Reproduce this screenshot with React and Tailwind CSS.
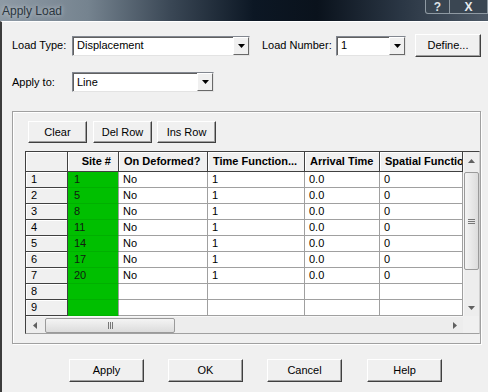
import React from 'react';

const rows = [
  { n: 1, site: '1', def: 'No', tf: '1', at: '0.0', sf: '0' },
  { n: 2, site: '5', def: 'No', tf: '1', at: '0.0', sf: '0' },
  { n: 3, site: '8', def: 'No', tf: '1', at: '0.0', sf: '0' },
  { n: 4, site: '11', def: 'No', tf: '1', at: '0.0', sf: '0' },
  { n: 5, site: '14', def: 'No', tf: '1', at: '0.0', sf: '0' },
  { n: 6, site: '17', def: 'No', tf: '1', at: '0.0', sf: '0' },
  { n: 7, site: '20', def: 'No', tf: '1', at: '0.0', sf: '0' },
  { n: 8, site: '', def: '', tf: '', at: '', sf: '' },
  { n: 9, site: '', def: '', tf: '', at: '', sf: '' },
];

const Btn = ({ children, className = '' }) => (
  <button className={`flex items-center justify-center bg-[#f0f0f0] border border-t-white border-l-white border-r-[#404040] border-b-[#404040] shadow-[inset_-1px_-1px_0_#a0a0a0] text-[11px] text-black ${className}`}>
    {children}
  </button>
);

const Combo = ({ value, className = '' }) => (
  <div className={`flex h-[20px] bg-white border border-t-[#828790] border-l-[#828790] border-r-[#e3e3e3] border-b-[#e3e3e3] shadow-[inset_1px_1px_0_#606060] ${className}`}>
    <div className="flex-1 flex items-center pl-[4px] text-[11px] text-black">{value}</div>
    <div className="w-[16px] flex items-center justify-center bg-[#f0f0f0] border border-t-white border-l-white border-r-[#696969] border-b-[#696969]">
      <svg width="7" height="4" viewBox="0 0 7 4"><polygon points="0,0 7,0 3.5,4" fill="#000" /></svg>
    </div>
  </div>
);

const Arrow = ({ dir }) => {
  const pts = {
    up: '0,4 7,4 3.5,0',
    down: '0,0 7,0 3.5,4',
    left: '4,0 4,7 0,3.5',
    right: '0,0 0,7 4,3.5',
  }[dir];
  const vert = dir === 'up' || dir === 'down';
  return (
    <svg width={vert ? 7 : 4} height={vert ? 4 : 7} viewBox={vert ? '0 0 7 4' : '0 0 4 7'}>
      <polygon points={pts} fill="#606060" />
    </svg>
  );
};

const headCell = 'bg-[#f0f0f0] border-r border-b border-r-[#404040] border-b-[#404040] shadow-[inset_1px_1px_0_#ffffff] font-bold text-[11px] text-black flex items-center whitespace-nowrap overflow-hidden';
const dataCell = 'bg-white border-r border-b border-[#a0a0a0] text-[11px] text-black flex items-center pl-[4px] whitespace-nowrap overflow-hidden';

export default function App() {
  return (
    <div className="w-[488px] h-[392px] overflow-hidden flex flex-col bg-[#f0f0f0] font-['Liberation_Sans',Arial,sans-serif]">
      <div className="h-[21px] flex justify-between items-start bg-[linear-gradient(90deg,#8e9aa5_0%,#75838f_18%,#3a4755_35%,#0c1724_52%,#0a121c_65%,#2a3644_82%,#4e5a67_100%)]">
        <div className="pl-[2px] pt-[2px] text-[12px] text-[#2b3640] [text-shadow:0_0_5px_rgba(220,225,230,0.9)]">Apply Load</div>
        <div className="flex">
          <div className="w-[25px] h-[14px] flex items-center justify-center border border-t-0 border-[#8f9aa3] rounded-bl-[3px] bg-[#3a4652] text-[12px] font-bold text-[#dfe3e7] leading-none">?</div>
          <div className="w-[38px] h-[14px] flex items-center justify-center border border-t-0 border-l-0 border-[#8f9aa3] bg-[#3a4652] text-[12px] font-bold text-[#e8ebee] leading-none">X</div>
        </div>
      </div>

      <div className="flex-1 border-l-2 border-l-[#3c3c3c] border-t border-t-white pl-[10px] pt-[12px]">
        <div className="flex items-center h-[23px]">
          <div className="w-[60px] text-[11px] text-black">Load Type:</div>
          <Combo value="Displacement" className="w-[178px]" />
          <div className="ml-[12px] w-[74px] text-[11px] text-black">Load Number:</div>
          <Combo value="1" className="w-[70px]" />
          <Btn className="ml-[9px] w-[66px] h-[23px]">Define...</Btn>
        </div>

        <div className="flex items-center mt-[15px] h-[20px]">
          <div className="w-[60px] text-[11px] text-black">Apply to:</div>
          <Combo value="Line" className="w-[142px]" />
        </div>

        <div className="mt-[19px] w-[469px] h-[233px] border border-[#a0a0a0] shadow-[inset_1px_1px_0_#ffffff,1px_1px_0_#ffffff] pt-[9px]">
          <div className="flex pl-[15px] h-[22px]">
            <Btn className="w-[59px] h-[22px]">Clear</Btn>
            <Btn className="ml-[6px] w-[59px] h-[22px]">Del Row</Btn>
            <Btn className="ml-[5px] w-[59px] h-[22px]">Ins Row</Btn>
          </div>

          <div className="mt-[8px] ml-[12px] w-[455px] border border-t-[#404040] border-l-[#404040] border-r-[#d0d0d0] border-b-[#a0a0a0] bg-[#f0f0f0]">
            <div className="flex">
              <div className="w-[437px] h-[164px] grid grid-cols-[42px_51px_89px_97px_75px_83px] grid-rows-[20px_repeat(9,16px)] bg-white">
                <div className={headCell}></div>
                <div className={`${headCell} justify-end pr-[7px]`}>Site #</div>
                <div className={`${headCell} pl-[5px]`}>On Deformed?</div>
                <div className={`${headCell} pl-[5px]`}>Time Function...</div>
                <div className={`${headCell} pl-[5px]`}>Arrival Time</div>
                <div className={`${headCell} pl-[5px]`}>Spatial Function</div>
                {rows.map((r) => (
                  <React.Fragment key={r.n}>
                    <div className="bg-[#f0f0f0] border-r border-b border-r-[#404040] border-b-[#404040] shadow-[inset_1px_1px_0_#ffffff] text-[11px] text-black flex items-center pl-[5px]">{r.n}</div>
                    <div className="bg-[#00bf00] border-r border-b border-r-[#a0a0a0] border-b-[#00b000] text-[11px] text-[#102010] flex items-center pl-[6px]">{r.site}</div>
                    <div className={dataCell}>{r.def}</div>
                    <div className={dataCell}>{r.tf}</div>
                    <div className={dataCell}>{r.at}</div>
                    <div className={dataCell}>{r.sf}</div>
                  </React.Fragment>
                ))}
              </div>
              <div className="w-[16px] h-[164px] flex flex-col items-center bg-[#ededed] border-l border-l-[#f8f8f8]">
                <div className="h-[17px] flex items-center justify-center"><Arrow dir="up" /></div>
                <div className="mt-[3px] w-[15px] h-[98px] rounded-[2px] border border-[#9a9a9a] bg-[linear-gradient(90deg,#f4f4f4,#dcdcdc)] flex items-center justify-center">
                  <div className="flex flex-col gap-[1px]">
                    <div className="w-[7px] h-[1px] bg-[#777]"></div>
                    <div className="w-[7px] h-[1px] bg-[#777]"></div>
                    <div className="w-[7px] h-[1px] bg-[#777]"></div>
                  </div>
                </div>
                <div className="flex-1"></div>
                <div className="h-[17px] flex items-center justify-center"><Arrow dir="down" /></div>
              </div>
            </div>
            <div className="flex h-[17px]">
              <div className="w-[437px] flex items-center bg-[#ededed] border-t border-t-[#f8f8f8]">
                <div className="w-[17px] flex items-center justify-center"><Arrow dir="left" /></div>
                <div className="ml-[2px] w-[130px] h-[15px] rounded-[2px] border border-[#9a9a9a] bg-[linear-gradient(180deg,#f4f4f4,#dcdcdc)] flex items-center justify-center">
                  <div className="flex gap-[1px]">
                    <div className="w-[1px] h-[7px] bg-[#777]"></div>
                    <div className="w-[1px] h-[7px] bg-[#777]"></div>
                    <div className="w-[1px] h-[7px] bg-[#777]"></div>
                  </div>
                </div>
                <div className="flex-1"></div>
                <div className="w-[17px] flex items-center justify-center"><Arrow dir="right" /></div>
              </div>
              <div className="flex-1 bg-[#f0f0f0]"></div>
            </div>
          </div>
        </div>

        <div className="flex mt-[15px] ml-[57px]">
          <Btn className="w-[75px] h-[23px]">Apply</Btn>
          <Btn className="ml-[24px] w-[75px] h-[23px]">OK</Btn>
          <Btn className="ml-[24px] w-[75px] h-[23px]">Cancel</Btn>
          <Btn className="ml-[25px] w-[75px] h-[23px]">Help</Btn>
        </div>
      </div>
    </div>
  );
}
